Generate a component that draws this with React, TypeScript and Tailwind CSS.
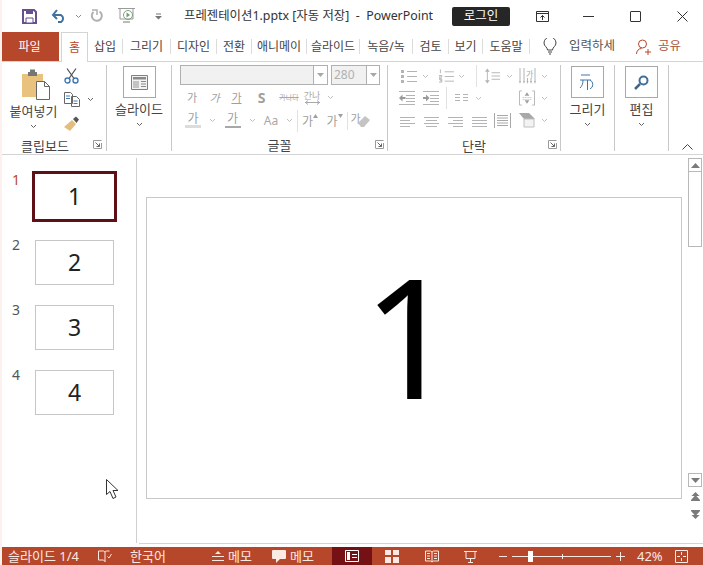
const Chev = ({ color = "#8a8a8a" }: { color?: string }) => (
  <svg width="7" height="5" viewBox="0 0 7 5" fill="none">
    <path d="M1 1l2.500 2.500L6 1" stroke={color} strokeWidth="1" />
  </svg>
);

const Launcher = () => (
  <svg width="9" height="9" viewBox="0 0 9 9" fill="none">
    <path d="M.5 8V.5H8.500M.5 8.500H8.500V3" stroke="#9a9a9a" />
    <path d="M2.500 2.500L6.500 6.500M6.500 3.500V6.500H3.500" stroke="#666" />
  </svg>
);

const Sep = ({ h = "h-[22px]" }: { h?: string }) => <div className={`w-px shrink-0 bg-[#e1e1e1] ${h}`} />;

const Cell = ({ w, children }: { w: string; children?: React.ReactNode }) => (
  <div className={`flex h-full shrink-0 items-center justify-center ${w}`}>{children}</div>
);

const Ga = ({ className = "" }: { className?: string }) => (
  <span className={`text-[11px] leading-none text-[#a0a0a0] ${className}`}>가</span>
);

// paragraph-group line icon, lines given as [x1, x2, y]
const Lines = ({ rows, w = 16 }: { rows: number[][]; w?: number }) => (
  <svg width={w} height="14" viewBox={`0 0 ${w} 14`} fill="none" stroke="#b4b4b4">
    {rows.map((r, i) => (
      <path key={i} d={`M${r[0]} ${r[2]}.5H${r[1]}`} />
    ))}
  </svg>
);

const ListIcon = () => (
  <svg width="16" height="14" viewBox="0 0 16 14" fill="none" stroke="#b4b4b4">
    <path d="M6 2.500h10M6 7.500h10M6 12.500h10" />
    <path d="M0 1h3v3H0zM0 6h3v3H0zM0 11h3v3H0z" fill="#b4b4b4" stroke="none" />
  </svg>
);

const NumIcon = () => (
  <svg width="16" height="14" viewBox="0 0 16 14" fill="none" stroke="#b4b4b4">
    <path d="M6 2.500h10M6 7.500h10M6 12.500h10M1.500 0v4M0 6.500h3v1.500H0v1.500h3M0 10.500h3v3H0M1 12h2" />
  </svg>
);

const SpacingIcon = () => (
  <svg width="16" height="16" viewBox="0 0 16 16" fill="none" stroke="#b4b4b4">
    <path d="M2.500 1v14" />
    <path d="M2.500 0L5 3.500H0zM2.500 16L5 12.500H0z" fill="#b4b4b4" stroke="none" />
    <path d="M7 4.500h9M7 8h9M7 11.500h9" />
  </svg>
);

const DirIcon = () => (
  <svg width="17" height="17" viewBox="0 0 17 17" fill="none" stroke="#b4b4b4">
    <path d="M1 0v14M5 0v14M16 0v14M8.500 10v4M12 10v4" />
    <path d="M0 13h2l-1 3zM4 13h2l-1 3zM7.500 13h2l-1 3zM11 13h2l-1 3zM15 13h2l-1 3z" fill="#b4b4b4" stroke="none" />
    <text x="7" y="9" fontSize="8" fill="#a8a8a8" stroke="none">가</text>
  </svg>
);

const IndentIcon = ({ right }: { right?: boolean }) => (
  <svg width="16" height="14" viewBox="0 0 16 14" fill="none" stroke="#b4b4b4">
    <path d="M0 .5h16M7 4.500h9M7 7.500h9M7 10.500h9M0 13.500h16" />
    {right ? (
      <path d="M0 6h3V3.500L6.500 7 3 10.500V8H0z" fill="#9a9a9a" stroke="none" />
    ) : (
      <path d="M6.500 6h-3V3.500L0 7l3.500 3.500V8h3z" fill="#9a9a9a" stroke="none" />
    )}
  </svg>
);

const AlignBoxIcon = () => (
  <svg width="17" height="16" viewBox="0 0 17 16" fill="none" stroke="#b4b4b4">
    <path d="M3 .5H.5v15H3M14 .5h2.500v15H14" />
    <path d="M4 7.500h9M4 9.500h9" strokeDasharray="1 1" />
    <path d="M8.500 2L6 5.500h5zM8.500 14L6 10.500h5z" fill="#a0a0a0" stroke="none" />
  </svg>
);

const Tab = ({ w, children, last }: { w: string; children: React.ReactNode; last?: boolean }) => (
  <div className={`flex h-full shrink-0 items-center ${w}`}>
    <div className="flex h-[16px] flex-1 items-center justify-center whitespace-nowrap text-[12px] leading-none text-[#444]">
      {children}
    </div>
    {!last && <div className="h-[15px] w-px bg-[#dcdcdc]" />}
  </div>
);

const GroupLabel = ({ children }: { children: React.ReactNode }) => (
  <div className="flex h-[14px] translate-y-[2px] items-center justify-center text-[13px] leading-none text-[#444]">{children}</div>
);

const BigButton = ({ label, children }: { label: string; children: React.ReactNode }) => (
  <div className="flex flex-1 flex-col items-center pt-[1px]">
    <div className="flex h-[32px] w-[33px] items-center justify-center border border-[#a8a8a8]">{children}</div>
    <div className="mt-[4px] flex h-[14px] items-center whitespace-nowrap text-[13px] leading-none text-[#444]">{label}</div>
    <div className="mt-[6px]"><Chev color="#666" /></div>
  </div>
);

const Thumb = ({ n, active }: { n: number; active?: boolean }) => (
  <div className="flex h-[65px] pl-[12px]">
    <div className={`w-[20px] text-[14px] leading-[16px] ${active ? "text-[#b7472a]" : "text-[#555]"}`}>{n}</div>
    {active ? (
      <div className="-mt-[1px] flex h-[51px] w-[85px] items-center justify-center border-[3px] border-[#5e1016] text-[23px] leading-none text-[#222]">{n}</div>
    ) : (
      <div className="ml-[3px] mt-[3px] flex h-[45px] w-[79px] items-center justify-center border border-[#c6c6c6] text-[23px] leading-none text-[#222]">{n}</div>
    )}
  </div>
);

const ScrollArrow = ({ up }: { up?: boolean }) => (
  <svg width="11" height="11" viewBox="0 0 11 11" fill="#7a7a7a">
    {up ? <path d="M5.500 3l4.500 5h-9z" /> : <path d="M1 3h9l-4.500 5z" />}
  </svg>
);

const DoubleArrow = ({ up }: { up?: boolean }) => (
  <svg width="11" height="9" viewBox="0 0 11 9" fill="#7a7a7a">
    {up ? (
      <path d="M5.500 0L9.500 4h-8zM5.500 3l4.500 5H1zM1 8h9v1H1z" />
    ) : (
      <path d="M1 0h9v1H1zM1 1h9L5.500 6zM1.500 5h8L5.500 9z" />
    )}
  </svg>
);

export default function App() {
  return (
    <div className="flex h-[565px] w-[703px] flex-col overflow-hidden border-l-2 border-[#fdf1ed] bg-white font-['Noto_Sans','Noto_Sans_CJK_KR',sans-serif]">
      {/* title bar */}
      <div className="-ml-[2px] flex h-[32px] shrink-0 items-center">
        <div className="ml-[22px] w-[29px]">
          <svg width="15" height="15" viewBox="0 0 15 15" fill="none">
            <path d="M1 1h11l2 2v11H1z" stroke="#66508f" strokeWidth="2" />
            <path d="M4 1h7v4H4z" fill="#66508f" />
            <path d="M4 9h7v5H4z" fill="#fff" stroke="#66508f" />
          </svg>
        </div>
        <div className="w-[20px]">
          <svg width="16" height="14" viewBox="0 0 16 14" fill="none">
            <path d="M3 6h7a4 4 0 0 1 0 7H7" stroke="#41729f" strokeWidth="2" />
            <path d="M6 1L2 6l4 4" stroke="#41729f" strokeWidth="2" />
          </svg>
        </div>
        <div className="ml-[4px] w-[15px]"><Chev /></div>
        <div className="w-[28px]">
          <svg width="14" height="14" viewBox="0 0 14 14" fill="none">
            <path d="M9.500 2.500a5 5 0 1 1-6 .5" stroke="#b0b0b0" strokeWidth="2" />
            <path d="M2 1h5v5" stroke="#b0b0b0" strokeWidth="1.500" />
          </svg>
        </div>
        <div className="w-[37px]">
          <svg width="18" height="18" viewBox="0 0 18 18" fill="none">
            <path d="M0 1.500H17M2 2v10h13V2" stroke="#9a9a9a" />
            <circle cx="10" cy="8" r="4.500" stroke="#7f9f7f" />
            <path d="M8.500 5.500L12 8l-3.500 2.500z" fill="#6f9f6f" />
            <path d="M5 15h7" stroke="#777" />
          </svg>
        </div>
        <div className="w-[29px]">
          <svg width="7" height="7" viewBox="0 0 7 7" fill="#777"><path d="M1 .5h5v1H1zM0 3h7L3.500 6.500z" /></svg>
        </div>
        <div className="w-[268px] whitespace-nowrap text-[12.400px] leading-none text-[#333]">프레젠테이션1.pptx [자동 저장]&nbsp; -&nbsp; PowerPoint</div>
        <div className="flex h-[19px] w-[58px] items-center justify-center rounded-[2px] bg-[#262626] text-[12.500px] leading-none text-white">로그인</div>
        <div className="ml-[26px] w-[47px]">
          <svg width="13" height="11" viewBox="0 0 13 11" fill="none" stroke="#333">
            <path d="M.5.500h12v10H.5zM.5 2.500h12M6.500 9V4.500M4.500 6.500l2-2 2 2" />
          </svg>
        </div>
        <div className="w-[47px]"><div className="h-px w-[11px] bg-[#333]" /></div>
        <div className="w-[47px]"><div className="h-[11px] w-[11px] rounded-[1px] border border-[#333]" /></div>
        <svg width="11" height="11" viewBox="0 0 11 11" fill="none" stroke="#333"><path d="M.5.500l10 10M10.500.500l-10 10" /></svg>
      </div>

      {/* tabs */}
      <div className="-ml-[2px] flex h-[30px] shrink-0 border-b border-[#d4d4d4]">
        <div className="flex h-[29px] w-[59px] items-center justify-center bg-[#b7472a] text-[12px] leading-none text-white">파일</div>
        <div className="relative ml-[2px] flex h-[30px] w-[27px] items-center justify-center border-x border-t border-[#d4d4d4] bg-white text-[12px] leading-none text-[#b7472a]">홈</div>
        <Tab w="w-[35px]">삽입</Tab>
        <Tab w="w-[48px]">그리기</Tab>
        <Tab w="w-[46px]">디자인</Tab>
        <Tab w="w-[35px]">전환</Tab>
        <Tab w="w-[55px]">애니메이</Tab>
        <Tab w="w-[53px]">슬라이드</Tab>
        <Tab w="w-[53px]">녹음/녹</Tab>
        <Tab w="w-[36px]">검토</Tab>
        <Tab w="w-[34px]">보기</Tab>
        <Tab w="w-[47px]">도움말</Tab>
        <div className="ml-[13px] flex h-full w-[26px] items-center">
          <svg width="14" height="17" viewBox="0 0 14 17" fill="none" stroke="#444">
            <path d="M4.500 12c0-3-3.500-3.500-3.500-7a6 6 0 0 1 12 0c0 3.500-3.500 4-3.500 7zM5 14h4M6 16h2" />
          </svg>
        </div>
        <div className="flex h-full w-[67px] items-center text-[12.500px] leading-none text-[#555]">입력하세</div>
        <div className="flex h-full items-center gap-[7px]">
          <svg width="15" height="16" viewBox="0 0 15 16" fill="none" stroke="#b7472a">
            <circle cx="6.500" cy="5" r="4" />
            <path d="M.5 15c0-3 2-5.500 5-5.500M9 13h6M12 10v6" />
          </svg>
          <span className="text-[12.500px] leading-none text-[#a5573f]">공유</span>
        </div>
      </div>

      {/* ribbon */}
      <div className="-ml-[2px] flex h-[93px] shrink-0 border-b border-[#d4d4d4] pt-[3px]">
        {/* clipboard */}
        <div className="flex h-[86px] w-[107px] flex-col border-r border-[#c8c8c8]">
          <div className="flex h-[75px]">
            <div className="flex w-[60px] flex-col items-center pl-[7px]">
              <svg width="30" height="31" viewBox="0 0 30 31" className="ml-[5px] mt-[4px]" fill="none">
                <path d="M1 5h21v23H1z" fill="#e9c27e" />
                <path d="M7 3h9v4H7zM9 .5h5v3H9z" fill="#767676" />
                <path d="M15.500 12.500h8l5 5v13h-13z" fill="#fff" stroke="#666" />
                <path d="M23.500 12.500v5h5" stroke="#666" />
              </svg>
              <div className="mt-[4px] flex h-[14px] items-center whitespace-nowrap text-[13px] leading-none text-[#444]">붙여넣기</div>
              <div className="mt-[6px]"><Chev color="#666" /></div>
            </div>
            <div className="flex w-[46px] flex-col pl-[4px] pt-[3px]">
              <svg width="15" height="16" viewBox="0 0 15 16" fill="none">
                <path d="M3 .5l7 10M12 .5l-7 10" stroke="#555" strokeWidth="1.300" />
                <circle cx="3.500" cy="12.500" r="2.500" stroke="#3f78b0" strokeWidth="1.400" />
                <circle cx="11.500" cy="12.500" r="2.500" stroke="#3f78b0" strokeWidth="1.400" />
              </svg>
              <div className="mt-[8px] flex items-center gap-[7px]">
                <svg width="16" height="15" viewBox="0 0 16 15" fill="none" stroke="#666">
                  <path d="M.5.500h6l2 2v9h-8zM7.500 4.500h5l3 3v7h-8z" fill="#fff" />
                  <path d="M2 4h4M2 6.500h4M9.500 9h4M9.500 11.500h4" stroke="#3f78b0" />
                </svg>
                <Chev color="#666" />
              </div>
              <svg width="16" height="15" viewBox="0 0 16 15" className="mt-[9px]">
                <path d="M0 11L8 4l4 4-6 7z" fill="#e3bd7b" />
                <path d="M9 3l3-2.500 3 3-2.500 3.500z" fill="#555" />
              </svg>
            </div>
          </div>
          <div className="relative pr-[16px]">
            <GroupLabel>클립보드</GroupLabel>
            <div className="absolute right-[4px] top-[3px]"><Launcher /></div>
          </div>
        </div>

        {/* slides */}
        <div className="flex h-[86px] w-[65px] flex-col items-center border-r border-[#c8c8c8]">
          <BigButton label="슬라이드">
            <svg width="17" height="15" viewBox="0 0 17 15" fill="none">
              <path d="M.5.500h16v14H.5z" stroke="#808080" fill="#f3f3f3" />
              <path d="M2 2h13v2.500H2z" fill="#8a8a8a" />
              <path d="M2 6h6v7H2z" fill="#c4c4c4" />
              <path d="M10 6.500h5M10 9h5M10 11.500h5" stroke="#8a8a8a" />
            </svg>
          </BigButton>
        </div>

        {/* font */}
        <div className="flex h-[86px] w-[216px] flex-col border-r border-[#c8c8c8]">
          <div className="ml-[8px] flex h-[22px] gap-[3px]">
            <div className="flex w-[148px] border border-[#b0b0b0] bg-[#f1f1f1]">
              <div className="flex-1" />
              <div className="flex w-[14px] items-center justify-center border-l border-[#b0b0b0] bg-white">
                <svg width="7" height="4" viewBox="0 0 7 4" fill="#a8a8a8"><path d="M0 0h7L3.500 4z" /></svg>
              </div>
            </div>
            <div className="flex w-[49px] border border-[#b0b0b0] bg-[#f1f1f1]">
              <div className="flex flex-1 items-center pl-[2px] text-[12px] leading-none text-[#b0b0b0]">280</div>
              <div className="flex w-[13px] items-center justify-center border-l border-[#b0b0b0] bg-white">
                <svg width="7" height="4" viewBox="0 0 7 4" fill="#a8a8a8"><path d="M0 0h7L3.500 4z" /></svg>
              </div>
            </div>
          </div>
          <div className="mt-[2px] flex h-[22px] pl-[9px]">
            <Cell w="w-[22px]"><Ga /></Cell>
            <Cell w="w-[23px]"><Ga className="italic" /></Cell>
            <Cell w="w-[21px]"><Ga className="underline" /></Cell>
            <Cell w="w-[29px]"><span className="text-[14px] font-bold leading-none text-[#a0a0a0]">S</span></Cell>
            <Cell w="w-[26px]"><span className="text-[7px] leading-none text-[#a8a8a8] line-through">가나다</span></Cell>
            <Cell w="w-[20px]">
              <div className="flex flex-col items-center">
                <span className="whitespace-nowrap text-[9px] leading-[9px] text-[#a8a8a8]">간나</span>
                <svg width="15" height="5" viewBox="0 0 15 5" fill="none" stroke="#a8a8a8"><path d="M0 2.500h15M3 .5l-2.500 2 2.500 2M12 .5l2.500 2-2.500 2" /></svg>
              </div>
            </Cell>
            <Cell w="w-[16px]"><Chev color="#c0c0c0" /></Cell>
          </div>
          <div className="mt-[2px] flex h-[24px] items-center pl-[12px]">
            <Cell w="w-[18px]">
              <div className="flex flex-col items-center">
                <Ga className="text-[12px]" />
                <div className="h-[3px] w-[16px] bg-[#dcdcdc]" />
              </div>
            </Cell>
            <Cell w="w-[20px]"><Chev color="#c0c0c0" /></Cell>
            <Cell w="w-[21px]">
              <div className="flex flex-col items-center">
                <Ga className="text-[12px]" />
                <div className="mt-px h-[2px] w-[16px] bg-[#a8a8a8]" />
              </div>
            </Cell>
            <Cell w="w-[18px]"><Chev color="#c0c0c0" /></Cell>
            <Cell w="w-[20px]"><span className="text-[12px] leading-none text-[#a8a8a8]">Aa</span></Cell>
            <Cell w="w-[16px]"><Chev color="#c0c0c0" /></Cell>
            <Sep />
            <Cell w="w-[24px]">
              <Ga className="mt-[3px] text-[12px]" />
              <svg width="5" height="4" viewBox="0 0 5 4" className="-mt-[9px]" fill="#a0a0a0"><path d="M2.500 0L5 4H0z" /></svg>
            </Cell>
            <Cell w="w-[25px]">
              <Ga className="mt-[3px] text-[12px]" />
              <svg width="5" height="4" viewBox="0 0 5 4" className="-mt-[9px]" fill="#a0a0a0"><path d="M0 0h5L2.500 4z" /></svg>
            </Cell>
            <Sep h="h-[18px]" />
            <Cell w="w-[24px]">
              <div className="flex items-center">
                <Ga className="-mb-[2px] -mt-[6px] text-[10px]" />
                <svg width="12" height="12" viewBox="0 0 12 12" className="-ml-[3px]" fill="#c4c4c4"><path d="M0 8l7-7 5 4-6 7H3z" /></svg>
              </div>
            </Cell>
          </div>
          <div className="relative mt-[5px] flex h-[14px] justify-center">
            <GroupLabel>글꼴</GroupLabel>
            <div className="absolute right-[3px] top-[3px]"><Launcher /></div>
          </div>
        </div>

        {/* paragraph */}
        <div className="flex h-[86px] w-[173px] flex-col border-r border-[#c8c8c8]">
          <div className="flex h-[22px] items-center pl-[12px]">
            <Cell w="w-[17px]"><ListIcon /></Cell>
            <Cell w="w-[17px]"><Chev color="#c0c0c0" /></Cell>
            <Cell w="w-[5px]" />
            <Cell w="w-[15px]"><NumIcon /></Cell>
            <Cell w="w-[14px]"><Chev color="#c0c0c0" /></Cell>
            <Cell w="w-[8px]" />
            <Sep />
            <Cell w="w-[8px]" />
            <Cell w="w-[15px]"><SpacingIcon /></Cell>
            <Cell w="w-[18px]"><Chev color="#c0c0c0" /></Cell>
            <Cell w="w-[18px]"><DirIcon /></Cell>
            <Cell w="w-[16px]"><Chev color="#c0c0c0" /></Cell>
          </div>
          <div className="flex h-[24px] items-center pl-[11px]">
            <Cell w="w-[16px]"><IndentIcon /></Cell>
            <Cell w="w-[8px]" />
            <Cell w="w-[16px]"><IndentIcon right /></Cell>
            <Cell w="w-[7px]" />
            <Sep />
            <Cell w="w-[8px]" />
            <Cell w="w-[13px]"><Lines w={13} rows={[[0, 5, 3], [8, 13, 3], [0, 5, 6], [8, 13, 6], [0, 5, 9], [8, 13, 9]]} /></Cell>
            <Cell w="w-[20px]"><Chev color="#c0c0c0" /></Cell>
            <Cell w="w-[31px]" />
            <Cell w="w-[16px]"><AlignBoxIcon /></Cell>
            <Cell w="w-[18px]"><Chev color="#c0c0c0" /></Cell>
          </div>
          <div className="flex h-[23px] items-center pl-[8px]">
            <Cell w="w-[24px]"><Lines rows={[[0, 15, 3], [0, 10, 6], [0, 15, 9], [0, 10, 12]]} /></Cell>
            <Cell w="w-[24px]"><Lines rows={[[0, 15, 3], [2, 13, 6], [0, 15, 9], [2, 13, 12]]} /></Cell>
            <Cell w="w-[24px]"><Lines rows={[[0, 15, 3], [5, 15, 6], [0, 15, 9], [5, 15, 12]]} /></Cell>
            <Cell w="w-[24px]"><Lines rows={[[0, 15, 3], [0, 15, 6], [0, 15, 9], [0, 15, 12]]} /></Cell>
            <Cell w="w-[20px]">
              <svg width="17" height="15" viewBox="0 0 17 15" fill="none" stroke="#a8a8a8"><path d="M.5 0v15M16.500 0v15M3 5h11M3 7.500h11M3 10h11M3 12.500h11M3 2.500h11" /></svg>
            </Cell>
            <Cell w="w-[7px]" />
            <Cell w="w-[16px]">
              <svg width="16" height="15" viewBox="0 0 16 15"><path d="M0 0h10l6 6H5z" fill="#a8a8a8" /><path d="M5 6h10v8H5z" fill="#f3f3f3" stroke="#c0c0c0" /></svg>
            </Cell>
            <Cell w="w-[18px]"><Chev color="#c0c0c0" /></Cell>
          </div>
          <div className="relative mt-[5px] flex h-[14px] justify-center">
            <GroupLabel>단락</GroupLabel>
            <div className="absolute right-[3px] top-[3px]"><Launcher /></div>
          </div>
        </div>

        {/* drawing */}
        <div className="flex h-[86px] w-[54px] flex-col border-r border-[#c8c8c8]">
          <BigButton label="그리기">
            <svg width="18" height="18" viewBox="0 0 18 18" fill="none" stroke="#3f78a8">
              <path d="M2 2h9M1 7h11M4 7c0 4-1 6-3 8M8.500 7v10" />
              <path d="M11 7a5 5 0 0 1 0 9" />
            </svg>
          </BigButton>
        </div>

        {/* editing */}
        <div className="flex h-[86px] w-[54px] flex-col border-r border-[#c8c8c8]">
          <BigButton label="편집">
            <svg width="15" height="15" viewBox="0 0 15 15" fill="none">
              <circle cx="9.500" cy="5.500" r="4" stroke="#3f6f9f" strokeWidth="2" />
              <path d="M6 9l-5 5" stroke="#44648a" strokeWidth="2.500" />
            </svg>
          </BigButton>
        </div>

        <div className="flex h-[86px] flex-1 items-end justify-center pb-[1px] pl-[2px]">
          <svg width="11" height="6" viewBox="0 0 11 6" fill="none" stroke="#444"><path d="M.5 5.500l5-5 5 5" /></svg>
        </div>
      </div>

      {/* main area */}
      <div className="-ml-[2px] flex min-h-0 flex-1">
        <div className="flex w-[137px] shrink-0 flex-col pt-[3px]">
          <div className="flex h-[385px] flex-col border-r border-[#d0d0d0] pt-[14px]">
            <Thumb n={1} active />
            <Thumb n={2} />
            <Thumb n={3} />
            <Thumb n={4} />
            <div className="relative flex-1">
              <svg width="14" height="21" viewBox="0 0 14 21" className="absolute left-[106px] top-[47px]" fill="#fff" stroke="#333">
                <path d="M.5.500v15l3.500-3 3 7 3-1.500-3-6.500h5z" />
              </svg>
            </div>
          </div>
        </div>
        <div className="flex min-w-0 flex-1 flex-col pt-[3px]">
          <div className="flex h-[385px]">
            <div className="flex-1 pl-[9px] pt-[39px]">
              <div className="flex h-[302px] w-[536px] items-center justify-center border border-[#c8c8c8] pb-[26px] pr-[8px] text-[166px] font-normal leading-none text-black">1</div>
            </div>
            <div className="mr-px flex w-[14px] flex-col items-center">
              <div className="flex h-[14px] w-[14px] items-center justify-center border border-[#b8b8b8]"><ScrollArrow up /></div>
              <div className="h-[75px] w-[14px] border-x border-b border-[#b8b8b8]" />
              <div className="flex-1" />
              <div className="flex h-[14px] w-[14px] items-center justify-center border border-[#b8b8b8]"><ScrollArrow /></div>
              <div className="mt-[5px]"><DoubleArrow up /></div>
              <div className="mb-[24px] mt-[9px]"><DoubleArrow /></div>
            </div>
          </div>
          <div className="ml-[2px] h-px bg-[#d4d4d4]" />
        </div>
      </div>

      {/* status bar */}
      <div className="-ml-[2px] flex h-[18px] shrink-0 items-center bg-[#b7472a] text-[13px] leading-none text-[#fbe9e3]">
        <div className="ml-[8px] w-[90px] whitespace-nowrap">슬라이드 1/4</div>
        <svg width="14" height="13" viewBox="0 0 14 13" fill="none" stroke="#fbe9e3"><path d="M.5 1h5l1.500 1 1.500-1h3M.5 1v9h5l1.500 1.500M7 2v10M9.500 6.500l1.500 1.500 2.500-4" /></svg>
        <div className="ml-[18px] w-[82px]">한국어</div>
        <svg width="12" height="11" viewBox="0 0 12 11" fill="#fbe9e3"><path d="M6 0l3 3H3zM0 5h12v1H0zM0 9h12v1H0z" /></svg>
        <div className="ml-[4px] w-[44px]">메모</div>
        <svg width="14" height="13" viewBox="0 0 14 13" fill="#fbe9e3"><path d="M1 0h12a1 1 0 0 1 1 1v7a1 1 0 0 1-1 1H8l-4 4V9H1a1 1 0 0 1-1-1V1a1 1 0 0 1 1-1z" /></svg>
        <div className="ml-[4px] w-[42px]">메모</div>
        <div className="flex h-full w-[40px] items-center justify-center bg-[#751014]">
          <svg width="14" height="12" viewBox="0 0 14 12" fill="none" stroke="#fff"><path d="M.5.500h13v11H.5z" /><path d="M2 2h3v8H2z" fill="#fff" stroke="none" /><path d="M7 4.500h5M7 7.500h5" /></svg>
        </div>
        <div className="ml-[13px] grid h-[13px] w-[14px] grid-cols-2 gap-[2px]">
          <div className="bg-[#fbe9e3]" /><div className="bg-[#fbe9e3]" /><div className="bg-[#fbe9e3]" /><div className="bg-[#fbe9e3]" />
        </div>
        <svg width="14" height="13" viewBox="0 0 14 13" fill="none" stroke="#fbe9e3" className="ml-[26px]">
          <path d="M.5 1h5l1.500 1 1.500-1h5v10h-5L7 12l-1.500-1h-5zM7 2v10M2 3.500h3M2 6h3M2 8.500h3M9 3.500h3M9 6h3M9 8.500h3" />
        </svg>
        <svg width="13" height="13" viewBox="0 0 13 13" fill="none" stroke="#fbe9e3" className="ml-[25px]">
          <path d="M0 1.500h13M2 2v6.500h9V2M6.500 8.500V12M4 12.500h5" />
        </svg>
        <div className="ml-[22px] h-px w-[8px] bg-[#fbe9e3]" />
        <div className="relative ml-[5px] flex h-full w-[99px] items-center">
          <div className="h-px w-full bg-[#fbe9e3]" />
          <div className="absolute left-[50px] h-[5px] w-px bg-[#fbe9e3]" />
          <div className="absolute left-[16px] h-[11px] w-[5px] bg-white" />
        </div>
        <svg width="9" height="9" viewBox="0 0 9 9" fill="none" stroke="#fbe9e3" className="ml-[5px]"><path d="M0 4.500h9M4.500 0v9" /></svg>
        <div className="ml-[12px] w-[38px]">42%</div>
        <svg width="13" height="13" viewBox="0 0 13 13" fill="none" stroke="#fbe9e3"><path d="M.5.500h12v12H.5zM6.500 2v3M6.500 8v3M2 6.500h3M8 6.500h3" /></svg>
      </div>
    </div>
  );
}
